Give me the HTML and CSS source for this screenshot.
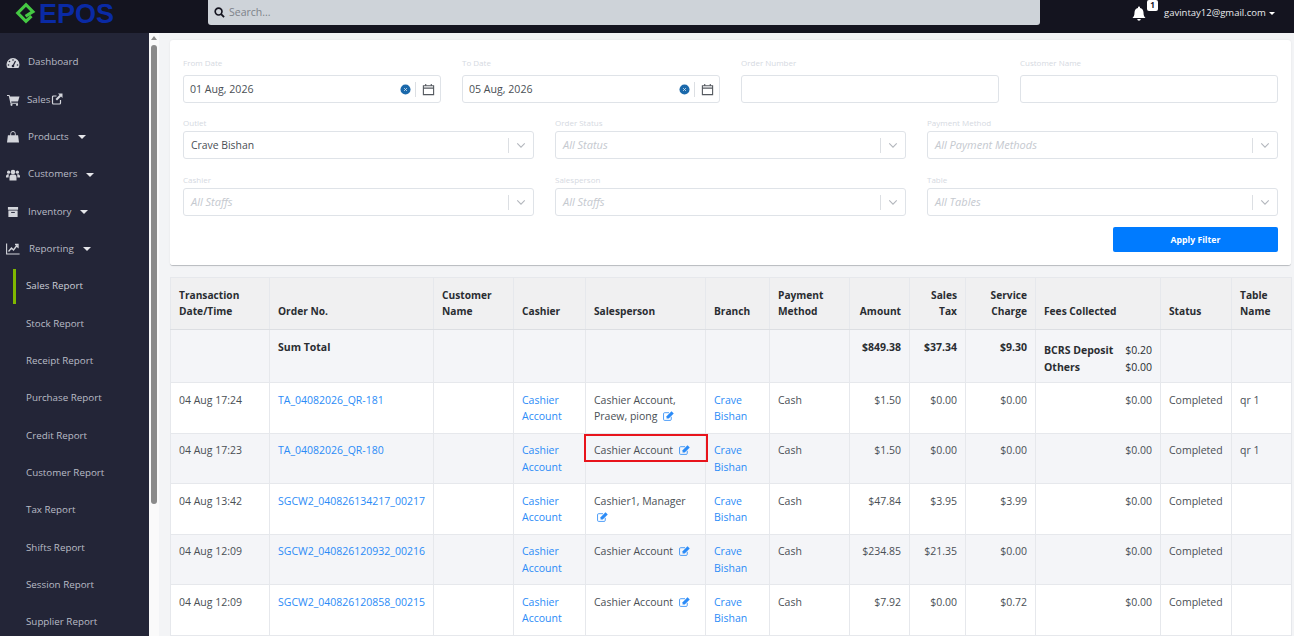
FILE: index.html
```html
<!DOCTYPE html>
<html lang="en">
<head>
    <meta charset="UTF-8">
    <meta name="viewport" content="width=device-width, initial-scale=1.0">
    <title>EPOS - Sales Report</title>
    <link rel="stylesheet" href="styles.css">
</head>
<body>
    <svg class="sprite" width="0" height="0">
        <symbol id="i-edit" viewBox="0 0 20 18">
            <path d="M15 10.500V15a2 2 0 0 1-2 2H3a2 2 0 0 1-2-2V5a2 2 0 0 1 2-2h8" fill="none" stroke="currentColor" stroke-width="1.500"/>
            <path d="M6.500 9.500 15.500 .5 19.500 4.500 10.500 13.500H6.500Z" fill="currentColor"/>
        </symbol>
        <symbol id="i-cal" viewBox="0 0 14 14">
            <path d="M1.500 3h11v9.500h-11ZM1.500 5.500h11M4 1v2.500M10 1v2.500" fill="none" stroke="currentColor" stroke-width="1.200"/>
        </symbol>
        <symbol id="i-clear" viewBox="0 0 12 12">
            <circle cx="6" cy="6" r="5.500" fill="#1b69ab"/>
            <path d="M4.500 4.500l3 3M7.500 4.500l-3 3" stroke="#cfe0ef" stroke-width="1"/>
        </symbol>
        <symbol id="i-down" viewBox="0 0 12 8">
            <path d="M1.500 1.500 6 6l4.500-4.500" fill="none" stroke="currentColor" stroke-width="1.300"/>
        </symbol>
    </svg>

    <!-- Top bar -->
    <header class="topbar">
        <div class="logo">
            <svg class="logo-mark" viewBox="0 0 24 24">
                <path d="M18 15.500 12 21 3 12 12 3 19.500 10.500 11.500 15.500" fill="none" stroke="#45c943" stroke-width="3.400"/>
            </svg>
            <span class="logo-text">EPOS</span>
        </div>
        <div class="search">
            <svg class="search-icon" viewBox="0 0 12 12"><circle cx="5" cy="5" r="3.700" fill="none" stroke="#14141f" stroke-width="1.800"/><path d="M7.800 7.800 11 11" stroke="#14141f" stroke-width="2"/></svg>
            <span>Search...</span>
        </div>
        <div class="user">
            <div class="bell">
                <svg viewBox="0 0 14 15"><path d="M7 0.500c.6 0 1 .4 1 1v.6c2.200.5 3.500 2.300 3.500 4.400 0 3 .8 4.200 2 5.500H.5c1.200-1.300 2-2.500 2-5.500 0-2.100 1.300-3.900 3.500-4.400v-.6c0-.6.4-1 1-1ZM5.300 13h3.400c0 1-.7 1.700-1.700 1.700S5.300 14 5.300 13Z" fill="#fff"/></svg>
                <span class="badge">1</span>
            </div>
            <span class="email">gavintay12@gmail.com</span>
            <span class="caret"></span>
        </div>
    </header>

    <div class="layout">
        <!-- Sidebar -->
        <nav class="sidebar">
            <a class="nav-item" href="#">
                <svg class="nav-icon" viewBox="0 0 14 12"><path d="M7 1a6.500 6.500 0 0 0-6.500 6.500c0 1.400.4 2.600 1.100 3.500h10.800c.7-.9 1.100-2.100 1.100-3.500A6.500 6.500 0 0 0 7 1Z" fill="currentColor"/><path d="M7 9 9.500 4" stroke="#232537" stroke-width="1.200"/><circle cx="7" cy="3" r=".8" fill="#232537"/><circle cx="3.500" cy="4.500" r=".8" fill="#232537"/><circle cx="2.500" cy="8" r=".8" fill="#232537"/><circle cx="11.500" cy="8" r=".8" fill="#232537"/><circle cx="7" cy="9" r="1.300" fill="#232537"/></svg>
                <span>Dashboard</span>
            </a>
            <a class="nav-item nav-tight" href="#">
                <svg class="nav-icon" viewBox="0 0 14 12"><path d="M1 1h2.500l.5 1.500h9.500l-1.500 5H5.200l.3 1.200H12v1H4.500L2.800 2H1Z" fill="currentColor"/><circle cx="5.500" cy="10.800" r="1.100" fill="currentColor"/><circle cx="11" cy="10.800" r="1.100" fill="currentColor"/></svg>
                <span>Sales</span>
                <svg class="ext-icon" viewBox="0 0 12 12"><path d="M9.500 7v3a1 1 0 0 1-1 1h-6a1 1 0 0 1-1-1V4a1 1 0 0 1 1-1h3" fill="none" stroke="currentColor" stroke-width="1.200"/><path d="M7 .500h4.500V5L10 3.500 6 7.500 4.500 6l4-4Z" fill="currentColor"/></svg>
            </a>
            <a class="nav-item" href="#">
                <svg class="nav-icon" viewBox="0 0 14 13"><path d="M1.500 4.500h11l1 8H.5Z" fill="currentColor"/><path d="M4.500 6V3a2.500 2.500 0 0 1 5 0v3" fill="none" stroke="currentColor" stroke-width="1"/></svg>
                <span>Products</span><span class="caret nav-caret"></span>
            </a>
            <a class="nav-item" href="#">
                <svg class="nav-icon" viewBox="0 0 14 12"><circle cx="7" cy="3" r="2.300" fill="currentColor"/><circle cx="2.600" cy="3.200" r="1.600" fill="currentColor"/><circle cx="11.400" cy="3.200" r="1.600" fill="currentColor"/><path d="M3.500 11.500V8a2.500 2.500 0 0 1 2.500-2.500h2A2.500 2.500 0 0 1 10.500 8v3.500ZM0 8.500V7a2 2 0 0 1 3-1.500C2.700 6.300 2.600 7.300 2.600 8.500ZM14 8.500V7a2 2 0 0 0-3-1.500c.3.800.4 1.800.4 3Z" fill="currentColor"/></svg>
                <span>Customers</span><span class="caret nav-caret"></span>
            </a>
            <a class="nav-item" href="#">
                <svg class="nav-icon" viewBox="0 0 14 13"><path d="M1.500 1h11v3h-11ZM2 5h10v7H2Z" fill="currentColor"/><path d="M5 7h4" stroke="#232537" stroke-width="1"/></svg>
                <span>Inventory</span><span class="caret nav-caret"></span>
            </a>
            <a class="nav-item nav-wide" href="#">
                <svg class="nav-icon" viewBox="0 0 14 12"><path d="M.6 .5v10.500h13" fill="none" stroke="currentColor" stroke-width="1.100"/><path d="M2.500 8.500 5.500 5l2 2 3-4 1.500 1.200V1.500H9" fill="none" stroke="currentColor" stroke-width="1.300"/></svg>
                <span>Reporting</span><span class="caret nav-caret"></span>
            </a>
            <a class="nav-sub active" href="#">Sales Report</a>
            <a class="nav-sub" href="#">Stock Report</a>
            <a class="nav-sub" href="#">Receipt Report</a>
            <a class="nav-sub" href="#">Purchase Report</a>
            <a class="nav-sub" href="#">Credit Report</a>
            <a class="nav-sub" href="#">Customer Report</a>
            <a class="nav-sub" href="#">Tax Report</a>
            <a class="nav-sub" href="#">Shifts Report</a>
            <a class="nav-sub" href="#">Session Report</a>
            <a class="nav-sub" href="#">Supplier Report</a>
        </nav>

        <div class="scrollbar">
            <span class="scroll-up"></span>
            <span class="scroll-thumb"></span>
        </div>

        <!-- Main Content -->
        <main class="main">
            <section class="filter-card">
                <div class="filter-row four">
                    <div class="field">
                        <label>From Date</label>
                        <div class="control">
                            <span class="value date-value">01 Aug, 2026</span>
                            <svg class="clear"><use href="#i-clear"/></svg>
                            <span class="sep"></span>
                            <svg class="cal"><use href="#i-cal"/></svg>
                        </div>
                    </div>
                    <div class="field">
                        <label>To Date</label>
                        <div class="control">
                            <span class="value date-value">05 Aug, 2026</span>
                            <svg class="clear"><use href="#i-clear"/></svg>
                            <span class="sep"></span>
                            <svg class="cal"><use href="#i-cal"/></svg>
                        </div>
                    </div>
                    <div class="field">
                        <label>Order Number</label>
                        <div class="control"></div>
                    </div>
                    <div class="field">
                        <label>Customer Name</label>
                        <div class="control"></div>
                    </div>
                </div>
                <div class="filter-row three">
                    <div class="field">
                        <label>Outlet</label>
                        <div class="control">
                            <span class="value">Crave Bishan</span>
                            <span class="sep sel-sep"></span>
                            <svg class="down"><use href="#i-down"/></svg>
                        </div>
                    </div>
                    <div class="field">
                        <label>Order Status</label>
                        <div class="control">
                            <span class="value holder">All Status</span>
                            <span class="sep sel-sep"></span>
                            <svg class="down"><use href="#i-down"/></svg>
                        </div>
                    </div>
                    <div class="field">
                        <label>Payment Method</label>
                        <div class="control">
                            <span class="value holder">All Payment Methods</span>
                            <span class="sep sel-sep"></span>
                            <svg class="down"><use href="#i-down"/></svg>
                        </div>
                    </div>
                </div>
                <div class="filter-row three">
                    <div class="field">
                        <label>Cashier</label>
                        <div class="control">
                            <span class="value holder">All Staffs</span>
                            <span class="sep sel-sep"></span>
                            <svg class="down"><use href="#i-down"/></svg>
                        </div>
                    </div>
                    <div class="field">
                        <label>Salesperson</label>
                        <div class="control">
                            <span class="value holder">All Staffs</span>
                            <span class="sep sel-sep"></span>
                            <svg class="down"><use href="#i-down"/></svg>
                        </div>
                    </div>
                    <div class="field">
                        <label>Table</label>
                        <div class="control">
                            <span class="value holder">All Tables</span>
                            <span class="sep sel-sep"></span>
                            <svg class="down"><use href="#i-down"/></svg>
                        </div>
                    </div>
                </div>
                <div class="filter-actions">
                    <button type="button">Apply Filter</button>
                </div>
            </section>

            <table class="report">
                <colgroup>
                    <col class="c-date"><col class="c-order"><col class="c-cust"><col class="c-cashier">
                    <col class="c-sales"><col class="c-branch"><col class="c-pay"><col class="c-amt">
                    <col class="c-tax"><col class="c-svc"><col class="c-fees"><col class="c-status"><col class="c-table">
                </colgroup>
                <thead>
                    <tr>
                        <th>Transaction Date/Time</th>
                        <th>Order No.</th>
                        <th>Customer Name</th>
                        <th>Cashier</th>
                        <th>Salesperson</th>
                        <th>Branch</th>
                        <th>Payment Method</th>
                        <th class="num">Amount</th>
                        <th class="num">Sales Tax</th>
                        <th class="num">Service Charge</th>
                        <th>Fees Collected</th>
                        <th>Status</th>
                        <th>Table Name</th>
                    </tr>
                </thead>
                <tbody>
                    <tr class="sum">
                        <td></td>
                        <td>Sum Total</td>
                        <td></td><td></td><td></td><td></td><td></td>
                        <td class="num">$849.38</td>
                        <td class="num">$37.34</td>
                        <td class="num">$9.30</td>
                        <td class="fees">
                            <div class="fee-line"><span>BCRS Deposit</span><span class="fee-val">$0.20</span></div>
                            <div class="fee-line"><span>Others</span><span class="fee-val">$0.00</span></div>
                        </td>
                        <td></td><td></td>
                    </tr>
                    <tr>
                        <td>04 Aug 17:24</td>
                        <td><a href="#">TA_04082026_QR-181</a></td>
                        <td></td>
                        <td><a href="#">Cashier Account</a></td>
                        <td>Cashier Account, Praew, piong <svg class="edit"><use href="#i-edit"/></svg></td>
                        <td><a href="#">Crave Bishan</a></td>
                        <td>Cash</td>
                        <td class="num">$1.50</td>
                        <td class="num">$0.00</td>
                        <td class="num">$0.00</td>
                        <td class="num">$0.00</td>
                        <td>Completed</td>
                        <td>qr 1</td>
                    </tr>
                    <tr>
                        <td>04 Aug 17:23</td>
                        <td><a href="#">TA_04082026_QR-180</a></td>
                        <td></td>
                        <td><a href="#">Cashier Account</a></td>
                        <td class="marked">Cashier Account <svg class="edit"><use href="#i-edit"/></svg><span class="highlight"></span></td>
                        <td><a href="#">Crave Bishan</a></td>
                        <td>Cash</td>
                        <td class="num">$1.50</td>
                        <td class="num">$0.00</td>
                        <td class="num">$0.00</td>
                        <td class="num">$0.00</td>
                        <td>Completed</td>
                        <td>qr 1</td>
                    </tr>
                    <tr>
                        <td>04 Aug 13:42</td>
                        <td><a href="#">SGCW2_040826134217_00217</a></td>
                        <td></td>
                        <td><a href="#">Cashier Account</a></td>
                        <td>Cashier1, Manager <svg class="edit"><use href="#i-edit"/></svg></td>
                        <td><a href="#">Crave Bishan</a></td>
                        <td>Cash</td>
                        <td class="num">$47.84</td>
                        <td class="num">$3.95</td>
                        <td class="num">$3.99</td>
                        <td class="num">$0.00</td>
                        <td>Completed</td>
                        <td></td>
                    </tr>
                    <tr>
                        <td>04 Aug 12:09</td>
                        <td><a href="#">SGCW2_040826120932_00216</a></td>
                        <td></td>
                        <td><a href="#">Cashier Account</a></td>
                        <td>Cashier Account <svg class="edit"><use href="#i-edit"/></svg></td>
                        <td><a href="#">Crave Bishan</a></td>
                        <td>Cash</td>
                        <td class="num">$234.85</td>
                        <td class="num">$21.35</td>
                        <td class="num">$0.00</td>
                        <td class="num">$0.00</td>
                        <td>Completed</td>
                        <td></td>
                    </tr>
                    <tr>
                        <td>04 Aug 12:09</td>
                        <td><a href="#">SGCW2_040826120858_00215</a></td>
                        <td></td>
                        <td><a href="#">Cashier Account</a></td>
                        <td>Cashier Account <svg class="edit"><use href="#i-edit"/></svg></td>
                        <td><a href="#">Crave Bishan</a></td>
                        <td>Cash</td>
                        <td class="num">$7.92</td>
                        <td class="num">$0.00</td>
                        <td class="num">$0.72</td>
                        <td class="num">$0.00</td>
                        <td>Completed</td>
                        <td></td>
                    </tr>
                </tbody>
            </table>
        </main>
    </div>
</body>
</html>
```

FILE: styles.css
```css
* {
    margin: 0;
    padding: 0;
    box-sizing: border-box;
}

html, body {
    height: 100%;
    overflow: hidden;
}

body {
    font-family: "Open Sans", "Noto Sans", sans-serif;
    font-size: 10.500px;
    line-height: 16.5px;
    color: #4a4f55;
    background: #f3f4f6;
}

a {
    text-decoration: none;
}

.sprite {
    position: absolute;
}

.caret {
    display: inline-block;
    width: 0;
    height: 0;
    border-left: 3.500px solid transparent;
    border-right: 3.500px solid transparent;
    border-top: 3.500px solid currentColor;
}

/* Top bar */
.topbar {
    display: flex;
    height: 33px;
    background: #14141f;
    color: #fff;
}

.logo {
    display: flex;
    align-items: flex-start;
    width: 208px;
    padding: 2px 0 0 15px;
}

.logo-mark {
    width: 22px;
    height: 22px;
}

.logo-text {
    margin-left: 2px;
    font-family: "Liberation Sans", sans-serif;
    font-size: 27px;
    font-weight: 700;
    line-height: 24px;
    color: #0a2aa5;
}

.search {
    display: flex;
    align-items: center;
    width: 832px;
    height: 25px;
    padding-left: 6px;
    background: #ced3d9;
    border-radius: 0 0 3px 3px;
    color: #7d8289;
}

.search-icon {
    width: 11px;
    height: 11px;
    margin-right: 4px;
}

.user {
    display: flex;
    align-items: center;
    margin-left: 92px;
    height: 27px;
    font-size: 9.500px;
}

.bell {
    position: relative;
    width: 32px;
}

.bell svg {
    display: block;
    width: 14px;
    height: 15px;
}

.badge {
    position: absolute;
    top: -6px;
    left: 15px;
    width: 11px;
    height: 11px;
    background: #fff;
    border-radius: 2px;
    color: #14141f;
    font-size: 8px;
    font-weight: 700;
    line-height: 10px;
    text-align: center;
}

.email {
    margin-right: 3px;
    color: #e9ebee;
}

/* Sidebar */
.layout {
    display: flex;
    height: 603px;
}

.sidebar {
    flex: 0 0 149px;
    padding-top: 11px;
    background: #232537;
    font-size: 9.800px;
}

.nav-item,
.nav-sub {
    display: flex;
    align-items: center;
    height: 37.330px;
    color: #b9bcc6;
}

.nav-item {
    padding-left: 6px;
}

.nav-icon {
    flex: 0 0 14px;
    height: 12px;
    margin-right: 8px;
    color: #d4d6dc;
}

.nav-tight .nav-icon {
    margin-right: 7px;
}

.nav-wide .nav-icon {
    margin-right: 9px;
}

.ext-icon {
    width: 12px;
    height: 12px;
    margin: -2px 0 0 1px;
    color: #d4d6dc;
}

.nav-caret {
    margin-left: 9px;
    border-left-width: 4px;
    border-right-width: 4px;
    border-top-width: 4px;
    color: #e5e6ea;
}

.nav-sub {
    padding-left: 26px;
}

.active {
    position: relative;
    color: #ccced6;
}

.active::before {
    content: "";
    position: absolute;
    left: 13px;
    top: 1px;
    width: 3px;
    height: 35px;
    background: #7fb800;
}

.scrollbar {
    position: relative;
    flex: 0 0 10px;
    background: #fafafa;
}

.scroll-up {
    position: absolute;
    top: 3px;
    left: 1.500px;
    border-left: 3.500px solid transparent;
    border-right: 3.500px solid transparent;
    border-bottom: 4px solid #8a8a8a;
}

.scroll-thumb {
    position: absolute;
    top: 12px;
    left: 2px;
    width: 6px;
    height: 459px;
    background: #8a8a8a;
    border-radius: 3px;
}

/* Filter card */
.main {
    flex: 1;
    padding: 7px 3px 0 11px;
    overflow: hidden;
}

.filter-card {
    height: 226px;
    padding: 17px 13px 0;
    background: #fff;
    border-radius: 3px;
    border-bottom: 1px solid #bcbfc3;
    box-shadow: 0 0 2px rgba(0, 0, 0, 0.08);
}

.filter-row {
    display: grid;
    grid-column-gap: 21px;
}

.four {
    grid-template-columns: repeat(4, 258px);
    margin-bottom: 13.500px;
}

.three {
    grid-template-columns: repeat(3, 351px);
    margin-bottom: 14.500px;
}

.field label {
    display: block;
    height: 11px;
    margin-bottom: 3.500px;
    font-size: 8px;
    line-height: 11px;
    color: #d5d9df;
}

.four label {
    margin-bottom: 7px;
}

.control {
    display: flex;
    align-items: center;
    height: 28px;
    padding: 0 7px;
    background: #fff;
    border: 1px solid #dfe3e8;
    border-radius: 3px;
}

.value {
    flex: 1;
    font-size: 10.400px;
    color: #4a4f55;
}

.date-value {
    margin-left: -1px;
    font-size: 10.600px;
}

.holder {
    font-size: 11px;
    font-style: italic;
    color: #c5c9cf;
}

.clear {
    width: 11px;
    height: 11px;
}

.sep {
    width: 1px;
    height: 15px;
    margin: 0 6px 0 4.500px;
    background: #dcdfe3;
}

.sel-sep {
    margin: 0 7px 0 0;
}

.cal {
    width: 13px;
    height: 13px;
    margin-right: -2px;
    color: #555a60;
}

.down {
    width: 10px;
    height: 7px;
    color: #b3b7bd;
}

.filter-actions {
    display: flex;
    justify-content: flex-end;
    margin-top: -3.500px;
}

button {
    width: 165px;
    height: 25px;
    background: #007bff;
    color: #fff;
    border: none;
    border-radius: 2px;
    font-family: inherit;
    font-size: 8.700px;
    font-weight: 700;
}

/* Report table */
.report {
    width: 1121px;
    margin-top: 11px;
    table-layout: fixed;
    border-collapse: collapse;
}

.c-date { width: 99px; }
.c-order { width: 164px; }
.c-cust { width: 80px; }
.c-cashier { width: 72px; }
.c-sales { width: 120px; }
.c-branch { width: 64px; }
.c-pay { width: 80px; }
.c-amt { width: 60px; }
.c-tax { width: 56px; }
.c-svc { width: 70px; }
.c-fees { width: 125px; }
.c-status { width: 71px; }
.c-table { width: 60px; }

th, td {
    padding: 8.750px 8px 7.750px;
    text-align: left;
    vertical-align: top;
    border: 1px solid #e6e8ec;
}

th {
    height: 52px;
    padding-bottom: 9.250px;
    vertical-align: bottom;
    background: #f0f0f1;
    color: #2a2d31;
    font-size: 10.200px;
    font-weight: 700;
    border-bottom-color: #dcdee2;
}

td {
    height: 50.500px;
    background: #fff;
}

td a {
    color: #2b8bf7;
}

tbody tr:nth-child(odd) td {
    background: #f4f5f8;
}

.sum td {
    height: 53px;
    color: #2a2d31;
    font-weight: 700;
}

.report .num {
    text-align: right;
}

.report .fees {
    padding-top: 12px;
    padding-bottom: 7px;
}

.fee-line {
    display: flex;
    justify-content: space-between;
}

.fee-val {
    font-weight: 400;
}

.edit {
    width: 11px;
    height: 10px;
    margin-left: 3px;
    vertical-align: -1px;
    color: #2b8bf7;
}

.marked {
    position: relative;
}

.highlight {
    position: absolute;
    top: 0;
    left: -2px;
    width: 124px;
    height: 28px;
    border: 2px solid #e8141c;
}
```
